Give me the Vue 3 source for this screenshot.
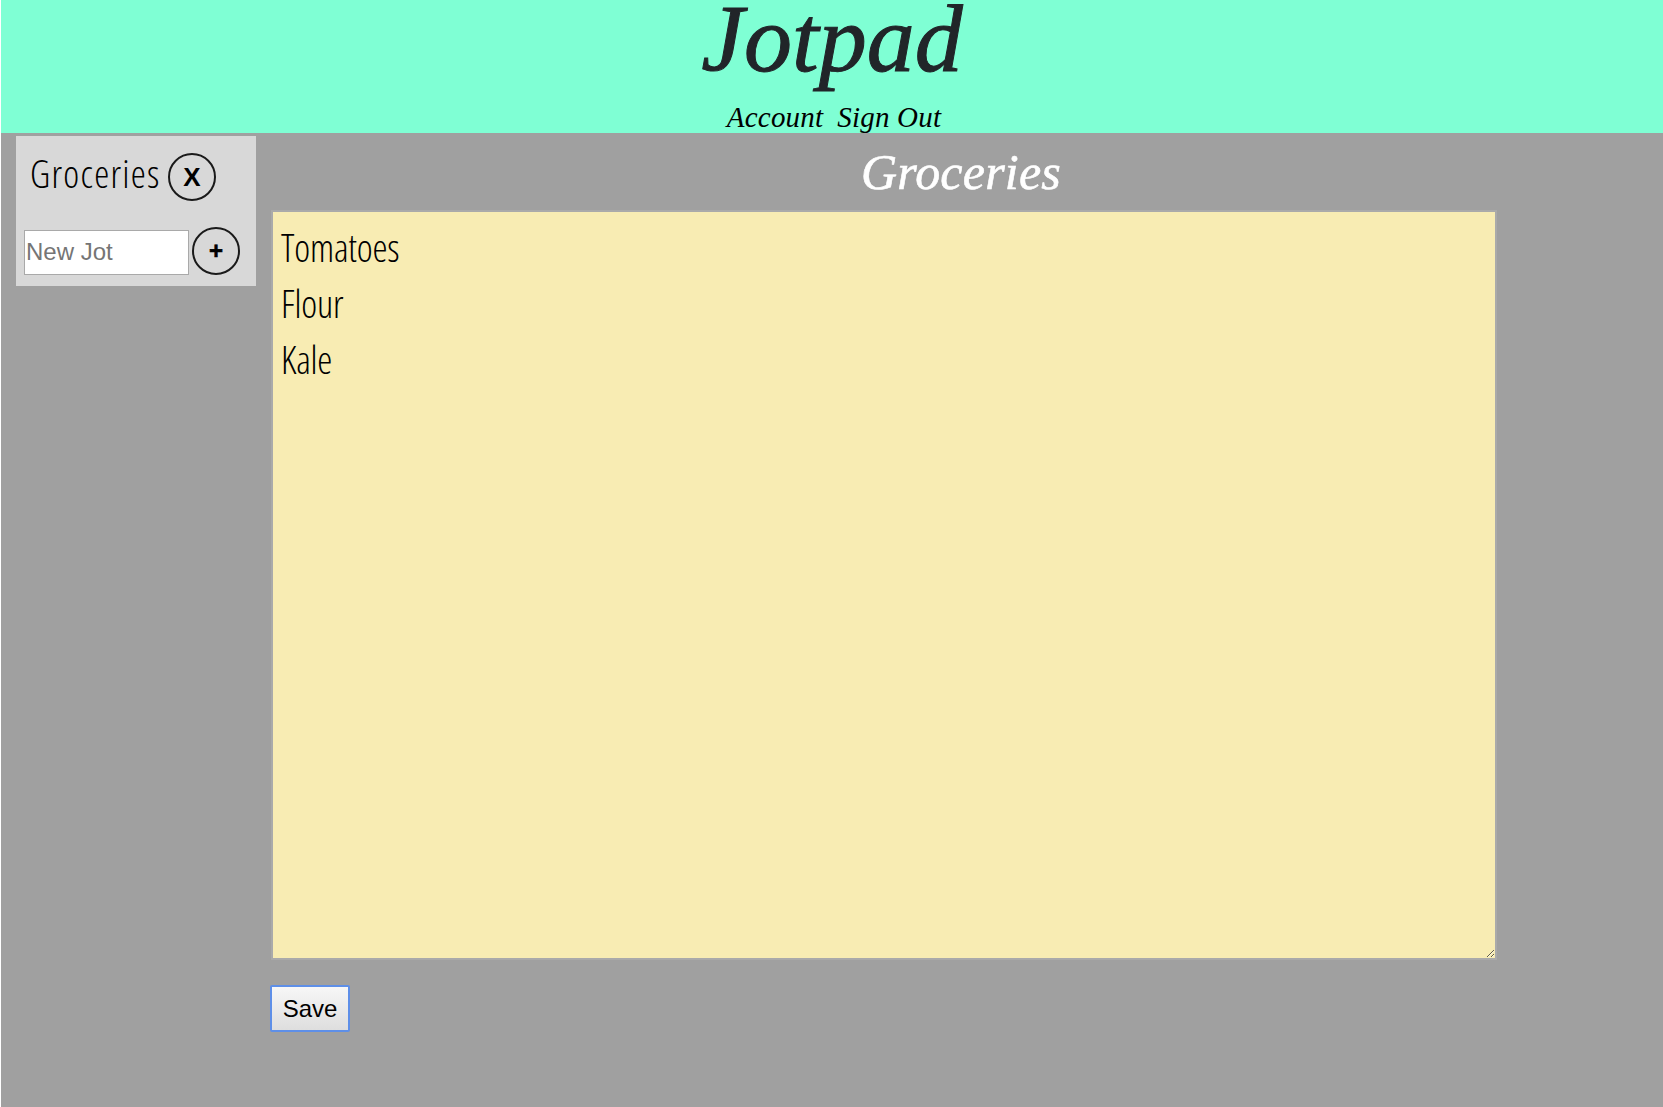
<script setup>
import { ref } from 'vue'
const title = 'Groceries'
const note = ref('Tomatoes\nFlour\nKale')
const newJot = ref('')
</script>

<template>
  <div class="page">
    <header class="top">
      <h1 class="brand">Jotpad</h1>
      <nav class="links">
        <a>Account</a>
        <a>Sign Out</a>
      </nav>
    </header>
    <div class="body-row">
      <aside class="side">
        <div class="jot-row">
          <span class="jot-name">{{ title }}</span>
          <button class="round x">X</button>
        </div>
        <div class="new-row">
          <input v-model="newJot" class="new-input" placeholder="New Jot" />
          <button class="round plus">+</button>
        </div>
      </aside>
      <main class="main">
        <h2 class="note-title">{{ title }}</h2>
        <textarea v-model="note" class="note"></textarea>
        <button class="save">Save</button>
      </main>
    </div>
  </div>
</template>

<style>
html, body { margin: 0; background: #fff; }
</style>

<style scoped>
.page {
  height: 1107px;
  padding-left: 1px;
  display: flex;
  flex-direction: column;
  background: #a0a0a0;
  box-sizing: border-box;
  overflow: hidden;
  box-shadow: inset 1px 0 0 #fff;
}
.top {
  height: 133px;
  flex: none;
  background: #7fffd4;
  display: flex;
  flex-direction: column;
  align-items: center;
  overflow: hidden;
}
.brand {
  margin: -9px 0 0;
  height: 107px;
  font: italic 400 96px/96px "Liberation Serif", serif;
  color: #212529;
  letter-spacing: 0;
  -webkit-text-stroke: 1px #212529;
}
.links {
  display: flex;
  gap: 14px;
  margin-top: 3px;
  margin-left: 4px;
  font: italic 400 29px/32px "Liberation Serif", serif;
  letter-spacing: 0.2px;
  color: #000;
}
.body-row {
  display: flex;
  flex: 1;
  align-items: flex-start;
}
.side {
  margin: 3px 0 0 15px;
  width: 240px;
  height: 150px;
  background: #d8d8d8;
  flex: none;
  box-sizing: border-box;
  padding: 17px 0 0 8px;
}
.jot-row {
  display: flex;
  align-items: center;
  height: 48px;
  padding-left: 6px;
}
.jot-name {
  font: 300 38px/42px "Open Sans", sans-serif;
  font-stretch: 75%;
  letter-spacing: 1.3px;
  width: 138px;
  margin-top: -8px;
  color: #000;
  white-space: nowrap;
}
.round {
  width: 48px;
  height: 48px;
  border-radius: 50%;
  border: 2px solid #1a1a1a;
  background: transparent;
  padding: 0;
  font: 700 24px/1 "Liberation Sans", sans-serif;
  color: #000;
  flex: none;
}
.x { font-size: 26px; }
.plus { -webkit-text-stroke: 0.6px #000; }
.new-row {
  display: flex;
  align-items: flex-end;
  margin-top: 26px;
  gap: 3px;
}
.new-input {
  width: 165px;
  height: 45px;
  box-sizing: border-box;
  border: 1px solid #a9a9a9;
  padding: 0 1px 2px;
  font: 400 24px "Liberation Sans", sans-serif;
  background: #fff;
  outline: none;
}
.new-input::placeholder { color: #757575; }
.main {
  margin-left: 15px;
  width: 1226px;
  display: flex;
  flex-direction: column;
  align-items: flex-start;
}
.note-title {
  margin: 0;
  height: 77px;
  width: 100%;
  padding-left: 154px;
  box-sizing: border-box;
  text-align: center;
  font: italic 400 50px/79px "Liberation Serif", serif;
  color: #fff;
  letter-spacing: 0.2px;
  -webkit-text-stroke: 0.6px #fff;
}
.note {
  width: 1226px;
  height: 750px;
  box-sizing: border-box;
  background: #f8ecb3;
  border: 2px solid #aaa;
  padding: 7px 8px;
  font: 300 38px/56px "Open Sans", sans-serif;
  font-stretch: 75%;
  letter-spacing: -0.2px;
  color: #000;
  outline: none;
  margin: 0;
}
.save {
  margin: 25px 0 0 -1px;
  width: 80px;
  height: 47px;
  box-sizing: border-box;
  border: 2px solid #5e8fe8;
  border-radius: 2px;
  background: linear-gradient(#f7f7f7, #dedede);
  font: 400 24px "Liberation Sans", sans-serif;
  color: #000;
  padding: 0;
}
</style>
